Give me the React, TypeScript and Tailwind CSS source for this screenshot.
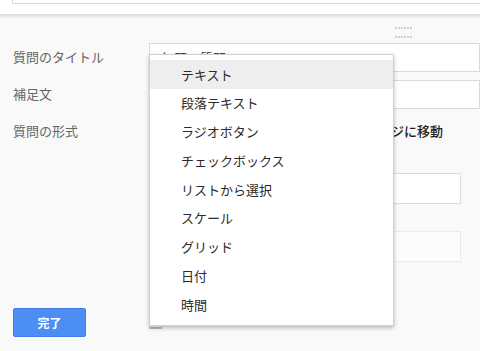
const menuItems = [
  "テキスト",
  "段落テキスト",
  "ラジオボタン",
  "チェックボックス",
  "リストから選択",
  "スケール",
  "グリッド",
  "日付",
  "時間",
];

const DragHandle = () => (
  <div className="grid grid-cols-6 gap-x-[1px] gap-y-[2px]">
    {Array.from({ length: 12 }).map((_, i) => (
      <span key={`dot_${i}`} className="w-[2px] h-[2px] bg-[#cfcfcf]" />
    ))}
  </div>
);

export default function App() {
  return (
    <div
      className="relative w-[480px] h-[351px] overflow-hidden bg-[#f9f9f9]"
      style={{ fontFamily: '"Noto Sans CJK JP", "Liberation Sans", sans-serif' }}
    >
      <div className="bg-white h-[14px] pl-[12px]">
        <div className="h-[4px] border-l border-b border-[#dcdcdc] bg-white" />
      </div>
      <div className="h-[5px] bg-gradient-to-b from-[#d9d9d9] to-[#f9f9f9]" />

      <div className="flex justify-end pr-[68px] pt-[8px] h-[24px]">
        <DragHandle />
      </div>

      <div className="flex flex-col gap-[8px]">
        <div className="flex items-center h-[29px]">
          <label className="w-[149px] pl-[13px] text-[13px] text-[#666] -mt-[2px]">質問のタイトル</label>
          <div className="flex-1 h-[29px] border border-[#d9d9d9] bg-white pl-[11px] text-[13px] text-[#222] leading-[27px]">
            無題の質問
          </div>
        </div>
        <div className="flex items-center h-[29px]">
          <label className="w-[149px] pl-[13px] text-[13px] text-[#666] -mt-[2px]">補足文</label>
          <div className="flex-1 h-[29px] border border-[#d9d9d9] bg-white" />
        </div>
        <div className="flex items-center h-[29px]">
          <label className="w-[149px] pl-[13px] text-[13px] text-[#666] -mt-[2px]">質問の形式</label>
          <div className="flex-1 flex justify-end pr-[37px] text-[13px] font-medium text-[#222] -mt-[1px]">
            回答に基づいてページに移動
          </div>
        </div>
      </div>

      <div className="flex flex-col gap-[27px] pl-[170px] pr-[19px] mt-[27px]">
        <div className="h-[31px] border border-[#dcdcdc] bg-white" />
        <div className="h-[31px] border border-[#ebebeb] bg-[#fcfcfc]" />
      </div>

      <div className="pl-[13px] mt-[46px] flex items-start gap-[63px]">
        <button className="w-[73px] h-[29px] rounded-[2px] bg-[#4d8ef5] border border-[#3f7ee8] text-white text-[12px] font-bold">
          完了
        </button>
        <span className="mt-[19px] w-[13px] h-[2px] bg-[#bbb]" />
      </div>

      <ul className="absolute left-[149px] top-[54px] w-[245px] h-[272px] bg-white border border-[#d0d0d0] shadow-[0_2px_4px_rgba(0,0,0,0.25)] pt-[5px]">
        {menuItems.map((item, i) => (
          <li
            key={`type_${i}`}
            className={`h-[28.75px] flex items-center pl-[31px] text-[13px] text-[#2a2a2a] ${i === 0 ? "bg-[#eeeeee]" : ""}`}
          >
            {item}
          </li>
        ))}
      </ul>
    </div>
  );
}
